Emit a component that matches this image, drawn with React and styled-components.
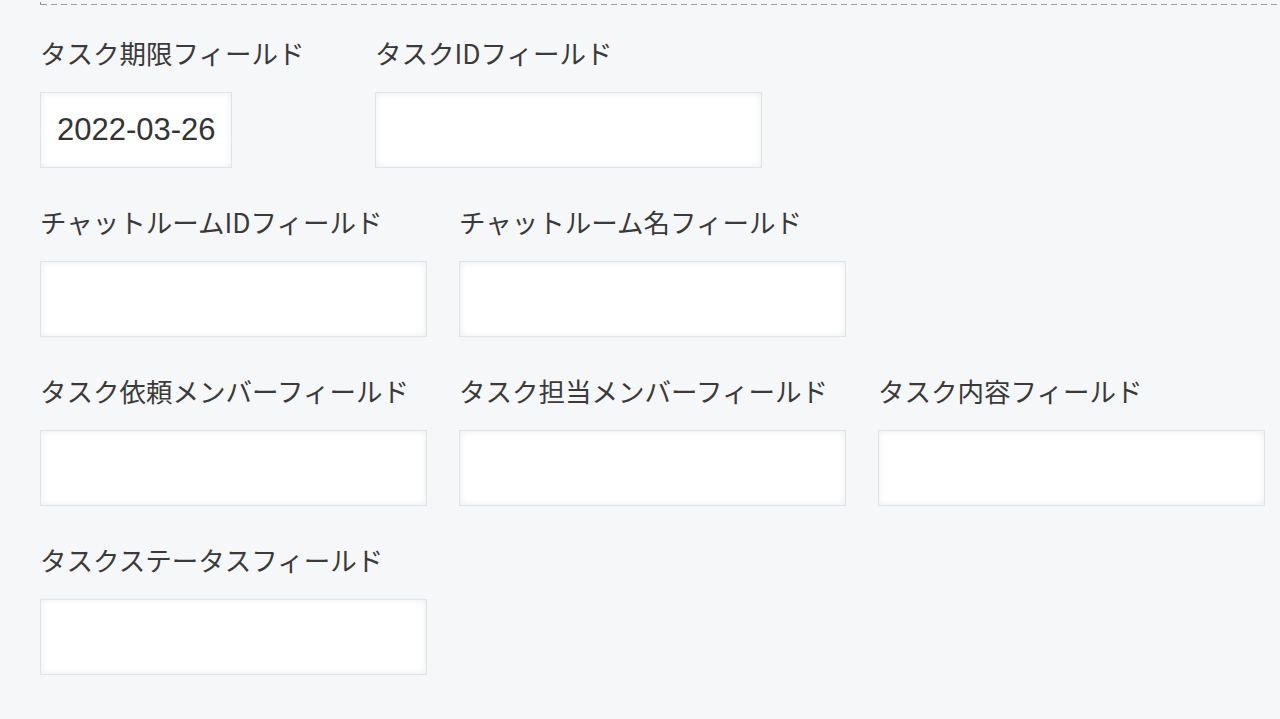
import styled, { createGlobalStyle } from 'styled-components'

const GlobalStyle = createGlobalStyle`
  body {
    margin: 0;
    background: #f6f7f9;
    overflow: hidden;
    font-family: "Noto Sans CJK JP", "Noto Sans", sans-serif;
    color: #333;
  }
`;

const Page = styled.div`
  padding: 0 0 40px 40px;
  min-height: 719px;
  box-sizing: border-box;
`;

const DashedBox = styled.div`
  margin-top: -100px;
  height: 105px;
  width: 1300px;
  box-sizing: border-box;
  border-left: 1px dashed #8f9194;
  background-image: repeating-linear-gradient(to right, #9c9ea1 0 6px, transparent 6px 10px);
  background-size: 100% 1px;
  background-position: left bottom;
  background-repeat: no-repeat;
`;

const Form = styled.div`
  margin-top: 30px;
  display: flex;
  flex-direction: column;
  gap: 36px;
`;

const Row = styled.div`
  display: flex;
  gap: 32px;
`;

const Field = styled.div`
  width: ${props => props.width || 387}px;
  display: flex;
  flex-direction: column;
`;

const Label = styled.div`
  font-size: 26.5px;
  line-height: 36px;
  height: 36px;
  white-space: nowrap;
  color: #3a3a3a;
  margin-bottom: 21px;
`;

const Input = styled.div`
  width: ${props => props.width || 387}px;
  height: 76px;
  box-sizing: border-box;
  background: #fff;
  border: 1px solid #e1e3e5;
  box-shadow: inset 0 0 7px #ebeced;
  font-family: "Liberation Sans", Arial, sans-serif;
  font-size: 31px;
  color: #333;
  display: flex;
  align-items: center;
  padding-left: 16px;
`;

const rows = [
  [
    { label: 'タスク期限フィールド', width: 303, inputWidth: 192, value: '2022-03-26' },
    { label: 'タスクIDフィールド' },
  ],
  [
    { label: 'チャットルームIDフィールド' },
    { label: 'チャットルーム名フィールド' },
  ],
  [
    { label: 'タスク依頼メンバーフィールド' },
    { label: 'タスク担当メンバーフィールド' },
    { label: 'タスク内容フィールド' },
  ],
  [
    { label: 'タスクステータスフィールド' },
  ],
];

function App() {
  return (
    <Page>
      <GlobalStyle />
      <DashedBox />
      <Form>
        {rows.map((row, i) => (
          <Row key={i}>
            {row.map(field => (
              <Field key={field.label} width={field.width}>
                <Label>{field.label}</Label>
                <Input width={field.inputWidth}>{field.value}</Input>
              </Field>
            ))}
          </Row>
        ))}
      </Form>
    </Page>
  );
}

export default App;
